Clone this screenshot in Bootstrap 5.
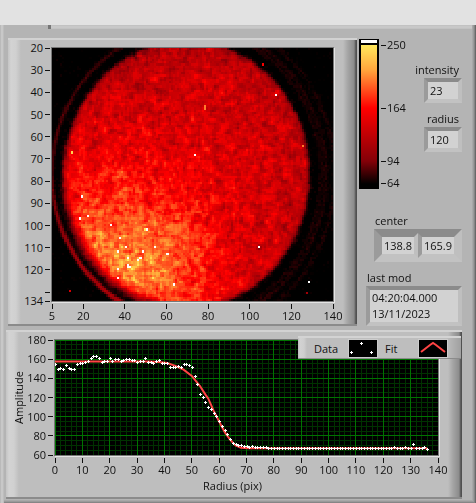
<!DOCTYPE html>
<html lang="en">
<head>
<meta charset="utf-8">
<meta name="viewport" content="width=device-width, initial-scale=1">
<title>Beam profile</title>
<link href="https://cdn.jsdelivr.net/npm/bootstrap@5.3.0/dist/css/bootstrap.min.css" rel="stylesheet">
<style>
  body { background: #e2e2e2; color: #111; font: 11px/15px "Open Sans", "Noto Sans", sans-serif; padding-top: 25px; }
  .console { background: #b4b4b4; padding: 0 14px 5px 6px;
    box-shadow: inset 1px 0 #bababa, inset 3px 0 #c8c8c8, inset 4px 0 #bdbdbd,
      inset -1px -1px #686868, inset -2px -2px #868686, inset -3px -3px #9a9a9a, inset -4px -4px #a8a8a8; }
  .tab-edge { height: 4px; margin: 0 -10px 9px 42px; border-left: 3px solid #777; background: linear-gradient(#bfbfbf, #cbcbcb 50%, #bfbfbf); }
  .plate { background: linear-gradient(90deg, #c4c4c4, #d3d3d3 3px, #d0d0d0 8px, #bebebe 13px, #bebebe calc(100% - 14px), #a4a4a4 calc(100% - 9px), #8c8c8c calc(100% - 3px), #505050 calc(100% - 1px));
    border-top: 2px solid #d2d2d2; border-bottom: 2px solid #8b8b8b; }
  .heat-plate { margin-left: 2px; display: grid; grid-template-columns: 44px 1fr 24px; padding-top: 8px; }
  .line-plate { position: relative; margin-top: 4px; display: grid; grid-template-columns: 20px 29px 1fr 24px; padding-top: 8px; }
  .heat-map { width: 100%; aspect-ratio: 281 / 253; image-rendering: pixelated; display: block; outline: 1px solid #777; box-shadow: 1px 1px 0 1px #e4e4e4; }
  .line-plot { width: 100%; aspect-ratio: 383 / 115; display: block; background: #000; outline: 1px solid #777; box-shadow: 1px 1px 0 1px #e4e4e4; }
  svg text { fill: #111; }
  .axis-y { width: 100%; height: 0; min-height: 100%; overflow: visible; display: block; }
  .axis-x { width: 100%; height: 23px; overflow: visible; display: block; }
  .axis-title { padding-right: 28px; }
  .tick { stroke: #111; stroke-width: 1; shape-rendering: crispEdges; }
  .axis-name { writing-mode: vertical-rl; transform: rotate(180deg); justify-self: end; align-self: center; height: 0; min-height: 100%; text-align: center; }
  .side { width: 105px; }
  .ramp { width: 20px; height: 150px; margin: 1px 0 0 2px; border: 1px solid #000; border-width: 1px 2px;
    background: linear-gradient(#fff 3px, #000 3px, #000 5px, #ffe85c 5px, #ffa53c 30px, #f00 68px, #840008 121px, #000 144px); }
  .ramp-scale { width: 30px; height: 150px; }
  .sunk { border: 4px solid; border-color: #8b8b8b #bfbfbf #c2c2c2 #9b9b9b; background: #d2d2d2; }
  .side input, .side textarea { border: 0; border-radius: 0; background: #d2d2d2; color: #111; padding: 0 0 0 2px; font-size: 11px; line-height: 16px; display: block; width: 100%; height: 17px; resize: none; overflow: hidden; outline: 0; }
  .side label { display: block; font-size: 11px; line-height: 16px; }
  .single { width: 38px; margin-left: auto; }
  .pair { background: #adadad; margin-left: 17px; padding: 0; }
  .pair .sunk { flex: 1; min-width: 0; }
  .stamp { margin-left: 9px; width: 96px; }
  .side textarea { height: 32px; }
  .right-label { padding-right: 3px; }
  .center-label { padding-left: 18px; }
  .stamp-label { padding-left: 10px; }
  .legend-box { position: absolute; top: 4px; right: 1px; width: 163px; height: 23px; padding-left: 16px; font-size: 11px;
    background: linear-gradient(90deg, #bdbdbd, #d2d2d2 2px, #cecece 6px, #bebebe 9px, #bebebe 148px, #a0a0a0); border-top: 2px solid #d3d3d3; border-bottom: 1px solid #8b8b8b; }
  .swatch { width: 28px; height: 17px; background: #000; display: block; outline: 1px solid #ccc; }
  .swatch-end { margin-right: 14px; }
  .fit-name { width: 34px; }
</style>
<script src="https://cdn.jsdelivr.net/npm/bootstrap@5.3.0/dist/js/bootstrap.bundle.min.js"></script>
</head>
<body>
<main class="console">
  <div class="tab-edge"></div>
  <div class="d-flex align-items-start">
    <section class="plate heat-plate flex-grow-1" aria-label="Intensity image">
      <svg class="axis-y" id="heatY"></svg>
      <canvas class="heat-map" id="heat" width="135" height="115"></canvas>
      <span></span><span></span>
      <svg class="axis-x" id="heatX"></svg>
    </section>
    <aside class="side flex-shrink-0">
      <div class="d-flex">
        <div class="ramp flex-shrink-0"></div>
        <svg class="ramp-scale flex-shrink-0" id="rampY" overflow="visible"></svg>
        <div class="flex-grow-1 text-end">
          <label for="intensity" class="right-label mt-4">intensity</label>
          <div class="sunk single"><input id="intensity" value="23" readonly></div>
          <label for="radius" class="right-label mt-2">radius</label>
          <div class="sunk single"><input id="radius" value="120" readonly></div>
        </div>
      </div>
      <label for="cx" class="center-label mt-4">center</label>
      <div class="sunk pair d-flex">
        <div class="sunk"><input id="cx" value="138.8" readonly></div>
        <div class="sunk"><input id="cy" value="165.9" aria-label="center y" readonly></div>
      </div>
      <label for="stamp" class="stamp-label mt-2">last mod</label>
      <div class="sunk stamp"><textarea id="stamp" readonly>04:20:04.000
13/11/2023</textarea></div>
    </aside>
  </div>

  <section class="plate line-plate" aria-label="Radial profile">
    <div class="axis-name">Amplitude</div>
    <svg class="axis-y" id="lineY"></svg>
    <svg class="line-plot" id="plot">
      <defs><path id="pt" d="M-1 0h3v1h-3zM0 -1h1v3h-1z" fill="#fff" shape-rendering="crispEdges"/></defs>
    </svg>
    <span></span><span></span><span></span>
    <div>
      <svg class="axis-x" id="lineX"></svg>
      <div class="text-center pb-1 axis-title">Radius (pix)</div>
    </div>
    <div class="legend-box d-flex align-items-center">
      <span>Data</span>
      <svg class="swatch ms-auto" viewBox="0 0 28 17"><path d="M1 12h3v1h-3zM2 11h1v3h-1zM11 3h3v1h-3zM12 2h1v3h-1zM21 12h3v1h-3zM22 11h1v3h-1z" fill="#fff"/></svg>
      <span class="ms-2 fit-name">Fit</span>
      <svg class="swatch swatch-end" viewBox="0 0 28 17"><path d="M2 12L11 5L14 3L17 5L26 12" fill="none" stroke="#f44" stroke-width="2"/></svg>
    </div>
  </section>
</main>
<script>
const NS = 'http://www.w3.org/2000/svg';
function put(parent, name, attrs, text) {
  const el = document.createElementNS(NS, name);
  for (const k in attrs) el.setAttribute(k, attrs[k]);
  if (text !== undefined) el.textContent = text;
  parent.appendChild(el);
  return el;
}
const byId = id => document.getElementById(id);

function axisY(id, values, lo, hi, w, hidden) {
  for (const v of values) {
    const y = (v - lo) / (hi - lo) * 100 + '%';
    put(byId(id), 'line', { class: 'tick', x1: w - 7, x2: w - 2, y1: y, y2: y });
    if (v !== hidden) put(byId(id), 'text', { x: w - 9, y, dy: 4, 'text-anchor': 'end' }, v);
  }
}
function axisX(id, values, lo, hi) {
  for (const v of values) {
    const x = (v - lo) / (hi - lo) * 100 + '%';
    put(byId(id), 'line', { class: 'tick', x1: x, x2: x, y1: 3, y2: 8 });
    put(byId(id), 'text', { x, y: 19, 'text-anchor': 'middle' }, v);
  }
}
axisY('heatY', [20,30,40,50,60,70,80,90,100,110,120,130,134], 20, 134, 44, 130);
axisX('heatX', [5,20,40,60,80,100,120,140], 5, 140);
axisY('lineY', [180,160,140,120,100,80,60], 180, 60, 29);
axisX('lineX', [0,10,20,30,40,50,60,70,80,90,100,110,120,130,140], 0, 140);
for (const [v, y] of [[250, 7], [164, 70], [94, 123], [64, 145]]) {
  put(byId('rampY'), 'line', { class: 'tick', x1: 2, x2: 7, y1: y, y2: y });
  put(byId('rampY'), 'text', { x: 8, y: y + 4 }, v);
}

/* Radial profile */
const plot = byId('plot');
const px = v => v / 140 * 100, py = v => (180 - v) / 120 * 100;
for (const major of [false, true]) {
  const stroke = major ? '#007300' : '#003200';
  for (let v = 0; v <= 140; v += 2) if ((v % 10 === 0) === major)
    put(plot, 'line', { x1: px(v) + '%', x2: px(v) + '%', y1: 0, y2: '100%', stroke, 'shape-rendering': 'crispEdges' });
  for (let v = 60; v <= 180; v += 5) if ((v % 20 === 0) === major)
    put(plot, 'line', { y1: py(v) + '%', y2: py(v) + '%', x1: 0, x2: '100%', stroke, 'shape-rendering': 'crispEdges' });
}
const fit = [[0,157.5],[34,157.5],[38,157],[41,156],[44,153],[47,149],[50,142.5],[53,132],[55,123],[56,119],[58,106],[60,95],[62,84],[64,76],[66,70],[68,67.5],[71,67],[136,67]];
const curve = put(plot, 'svg', { width: '100%', height: '100%', viewBox: '0 0 100 100', preserveAspectRatio: 'none' });
put(curve, 'polyline', { points: fit.map(p => px(p[0]) + ',' + py(p[1])).join(' '), fill: 'none', stroke: '#f44', 'stroke-width': 2, 'vector-effect': 'non-scaling-stroke' });
const data = [155,150,151,150,154,151,150,150,155,156,156,157,158,161,163,163,161,157,158,158,161,158,160,160,158,159,160,160,159,159,157,158,158,161,157,157,156,158,159,156,156,156,152,152,152,153,152,155,155,154,152,142,134,124,121,115,110,108,104,101,95,90,86,82,77,73,71,70,70,69,69,68,69,68,68,68,68,68];
while (data.length < 137) data.push(67);
data[131] = 71.5; data[136] = 66; data[124] = 68; data[128] = 68; data[135] = 68;
data.forEach((v, i) => put(plot, 'use', { href: '#pt', x: px(i) + '%', y: py(v) + '%' }));

/* Intensity image: a disc with diffraction rings and a hot lobe at the lower left */
const W = 135, H = 115, ctx = byId('heat').getContext('2d'), img = ctx.createImageData(W, H);
let seed = 71;
const rnd = () => (seed = (seed * 1664525 + 1013904223) >>> 0) / 4294967296;
const gauss = () => rnd() + rnd() + rnd() + rnd() - 2;
const noise = Array.from({ length: W * H }, gauss);
const at = (x, y) => noise[Math.max(0, Math.min(H - 1, y)) * W + Math.max(0, Math.min(W - 1, x))];
const stops = [[64,0,0,0],[94,132,0,8],[164,255,0,0],[210,255,110,40],[240,255,190,65],[250,255,232,92]];
function colour(v) {
  if (v > 258) return [255, 255, 255];
  if (v <= 64) return [0, 0, 0];
  for (let i = 1; i < stops.length; i++) if (v <= stops[i][0]) {
    const a = stops[i - 1], b = stops[i], t = (v - a[0]) / (b[0] - a[0]);
    return [1, 2, 3].map(k => a[k] + (b[k] - a[k]) * t);
  }
  return [255, 232, 92];
}
const lobe = (x, y, cx, cy, sx, sy) => Math.exp(-((x - cx) ** 2) / (2 * sx * sx) - ((y - cy) ** 2) / (2 * sy * sy));
const hot = [[194,155,270],[275,95,270],[260,246,270],[310,283,270],[302,146,215],[264,64,160],[306,294,110],[70,292,140],[83,197,270],[81,218,270],[89,217,270],[111,226,270],[146,229,270],[145,229,250],[119,239,270],[117,252,270],[143,252,270],[140,258,270],[129,265,270],[129,267,270],[131,267,270],[168,253,270],[126,248,270],[155,248,270],[173,285,270],[118,270,270],[117,277,270],[72,153,245],[206,106,215],[206,109,215]];
for (let j = 0; j < H; j++) for (let i = 0; i < W; i++) {
  const x = 52 + (i + .5) * 281 / W, y = 48 + (j + .5) * 253 / H;
  const dx = (x - 186.5) / 123.5, dy = (y - 174.5) / 134;
  const r = (Math.hypot(dx, dy) - 1) * 124;
  let wide = 0;
  for (let b = -2; b <= 2; b++) for (let a = -2; a <= 2; a++) wide += at(i + a, j + b);
  const n = at(i, j) * 16 + (at(i - 1, j) + at(i + 1, j) + at(i, j - 1) + at(i, j + 1)) * 7 + wide * .7;
  let inner = 126 + 78 * lobe(x, y, 135, 268, 58, 48) + 26 * lobe(x, y, 75, 200, 45, 60) + 18 * lobe(x, y, 185, 185, 70, 80) - 4 * (y < 75);
  inner += n * (0.35 + inner / 260);
  const left = Math.max(0, -dx), low = Math.max(0, dy);
  const ring = (c, w, a) => a * Math.exp(-((r - c) ** 2) / (2 * w * w));
  let outer = 61 + at(i, j) * 4 + ring(11, 1.6, 8 + 11 * left + (dx < 0 ? 46 * low * Math.min(1, left * 4) : 0)) + ring(16, 2, dx > 0 ? 9 : 0) + ring(25, 2, dx > 0 ? 8 : 0);
  const t = 1 / (1 + Math.exp((r + 1.5) / (1.3 + left * low * 2.6)));
  let v = inner * t + outer * (1 - t);
  for (const h of hot) if (Math.floor((h[0] - 52) * W / 281) === i && Math.floor((h[1] - 48) * H / 253) === j) v = h[2];
  const c = colour(v);
  img.data.set([c[0], c[1], c[2], 255], (j * W + i) * 4);
}
ctx.putImageData(img, 0, 0);
</script>
</body>
</html>
